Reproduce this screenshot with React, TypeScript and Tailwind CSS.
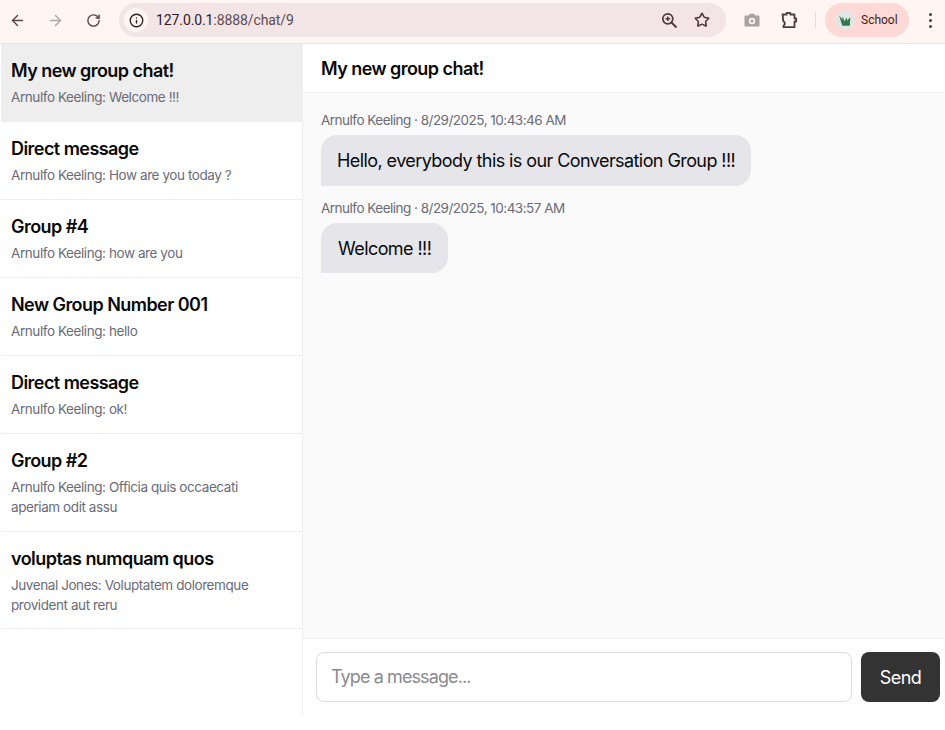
import { ArrowLeft, ArrowRight, RotateCw, Info, Star } from "lucide-react";

const chats = [
  { t: "My new group chat!", s: "Arnulfo Keeling: Welcome !!!", active: true },
  { t: "Direct message", s: "Arnulfo Keeling: How are you today ?" },
  { t: "Group #4", s: "Arnulfo Keeling: how are you" },
  { t: "New Group Number 001", s: "Arnulfo Keeling: hello" },
  { t: "Direct message", s: "Arnulfo Keeling: ok!" },
  { t: "Group #2", s: "Arnulfo Keeling: Officia quis occaecati aperiam odit assu" },
  { t: "voluptas numquam quos", s: "Juvenal Jones: Voluptatem doloremque provident aut reru", last: true },
];

const messages = [
  { m: "Arnulfo Keeling · 8/29/2025, 10:43:46 AM", b: "Hello, everybody this is our Conversation Group !!!" },
  { m: "Arnulfo Keeling · 8/29/2025, 10:43:57 AM", b: "Welcome !!!" },
];

function Puzzle() {
  return (
    <svg width="18" height="18" viewBox="0 0 18 18" fill="none" stroke="#4e3b3b" strokeWidth="1.8" strokeLinejoin="round">
      <path d="M2.5 3.5h4.2V1.8h3.6v1.7h4.2v4h1.7v3h-1.7v5.7H3.5v-1.6l1.2-1.2v-1.8L3 9.5V6.5L2.5 3.5z" />
    </svg>
  );
}

function ZoomGlyph() {
  return (
    <svg width="17" height="17" viewBox="0 0 17 17" fill="none" stroke="#4e3b3b" strokeWidth="1.7">
      <circle cx="6.8" cy="6.8" r="5" />
      <path d="M10.5 10.5L15.5 15.5" strokeWidth="2" />
      <path d="M4.5 6.8h4.6M6.8 4.5v4.6" strokeWidth="1.5" />
    </svg>
  );
}

function CameraGlyph() {
  return (
    <svg width="16" height="14" viewBox="0 0 16 14">
      <path fill="#a8a2a2" d="M1.5 2.5h3.2L6 .8h4l1.3 1.7h3.2A1 1 0 0 1 15.5 3.5v9a1 1 0 0 1-1 1h-13a1 1 0 0 1-1-1v-9a1 1 0 0 1 1-1z" />
      <circle cx="8" cy="8" r="3.2" fill="#fff5f3" />
      <circle cx="8" cy="8" r="1.6" fill="#a8a2a2" />
    </svg>
  );
}

export default function App() {
  return (
    <div className="w-[945px] h-[730px] bg-white overflow-hidden flex flex-col font-['Inter',sans-serif]">
      <div className="h-[44px] shrink-0 bg-[#fff5f3] border-b border-[#f3dfdc] flex items-center pb-[3px] font-['Roboto',sans-serif]">
        <ArrowLeft size={17} strokeWidth={2} className="ml-[9px] text-[#5a4444]" />
        <ArrowRight size={17} strokeWidth={2} className="ml-[21px] text-[#b3a5a5]" />
        <RotateCw size={15} strokeWidth={2.2} className="ml-[22px] text-[#5a4444]" />
        <div className="ml-[18px] w-[607px] h-[34px] rounded-full bg-[#f3e4e5] flex items-center pl-[5px] pr-[16px]">
          <div className="w-[24px] h-[24px] rounded-full bg-[#fff6f4] flex items-center justify-center">
            <Info size={15} strokeWidth={2.2} className="text-[#2f2222]" />
          </div>
          <span className="ml-[8px] text-[14px] tracking-[-0.1px] text-[#2a1d2a]">
            127.0.0.1<span className="text-[#5c4c52]">:8888/chat/9</span>
          </span>
          <div className="ml-auto"><ZoomGlyph /></div>
          <Star size={16} strokeWidth={2.4} className="ml-[16px] text-[#4e3b3b]" />
        </div>
        <div className="ml-[18px]"><CameraGlyph /></div>
        <div className="ml-[20px]"><Puzzle /></div>
        <div className="ml-[17px] w-px h-[16px] bg-[#f6d5d2]" />
        <div className="ml-[9px] w-[84px] h-[34px] rounded-full bg-[#ffd9d5] flex items-center pl-[10px]">
          <div className="w-[20px] h-[20px] rounded-full bg-[#e4e6e4] flex items-center justify-center">
            <svg width="15" height="15" viewBox="0 0 14 14" fill="#2f7a4f">
              <path d="M1 2l3 4 .5-3 1.5 5 2-4 .5 3 3-3-.5 8H4z" />
            </svg>
          </div>
          <span className="ml-[6px] text-[12px] text-[#3c1f24]">School</span>
        </div>
        <div className="ml-[20px] flex flex-col gap-[3px]">
          <div className="w-[3px] h-[3px] rounded-full bg-[#4e3b3b]" />
          <div className="w-[3px] h-[3px] rounded-full bg-[#4e3b3b]" />
          <div className="w-[3px] h-[3px] rounded-full bg-[#4e3b3b]" />
        </div>
      </div>

      <div className="h-[672px] flex pl-px pr-px">
        <aside className="w-[302px] shrink-0 border-r border-[#eeeeee]">
          {chats.map((c, i) => (
            <div key={i} className={`pl-[10px] pr-[40px] pt-[13px] ${c.last ? "pb-[13px]" : "pb-[14px]"} border-b border-[#eeeeee] ${c.active ? "bg-[#eeeeee]" : ""}`}>
              <div className="text-[18px] leading-[28px] font-semibold tracking-[-0.55px] text-[#0a0a0a] whitespace-nowrap">{c.t}</div>
              <div className="mt-[2px] text-[13.5px] leading-[20px] tracking-[-0.42px] text-[#6b6b76]">{c.s}</div>
            </div>
          ))}
        </aside>
        <main className="flex-1 min-w-0 flex flex-col">
          <div className="h-[49px] shrink-0 border-b border-[#eeeeee] pl-[18px] flex items-center text-[18px] font-semibold tracking-[-0.55px] text-[#0a0a0a]">
            My new group chat!
          </div>
          <div className="flex-1 bg-[#fafafa] px-[18px] pt-[17px]">
            {messages.map((x, i) => (
              <div key={i} className="mb-[12px]">
                <div className="text-[13.5px] leading-[20px] tracking-[-0.51px] text-[#6b6b76]">{x.m}</div>
                <div className={`mt-[5px] w-fit ${i === 0 ? "px-[16px] pt-[12px] pb-[11px]" : "px-[17px] pt-[12px] pb-[10px]"} rounded-[16px] rounded-bl-none bg-[#e5e5ea] text-[18px] leading-[28px] tracking-[-0.58px] text-[#0a0a0a]`}>
                  {x.b}
                </div>
              </div>
            ))}
          </div>
          <div className="h-[78px] shrink-0 border-t border-[#eeeeee] bg-white flex items-start pt-[13px] pl-[13px] pr-[4px] gap-[9px]">
            <div className="flex-1 h-[50px] rounded-[8px] border border-[#dddddd] flex items-center pl-[14px] pb-[1px] text-[18px] tracking-[-0.9px] text-[#8a8a8f]">
              Type a message...
            </div>
            <div className="w-[79px] h-[50px] rounded-[8px] bg-[#333333] text-white text-[18px] tracking-[-0.5px] flex items-center justify-center">
              Send
            </div>
          </div>
        </main>
      </div>
    </div>
  );
}
